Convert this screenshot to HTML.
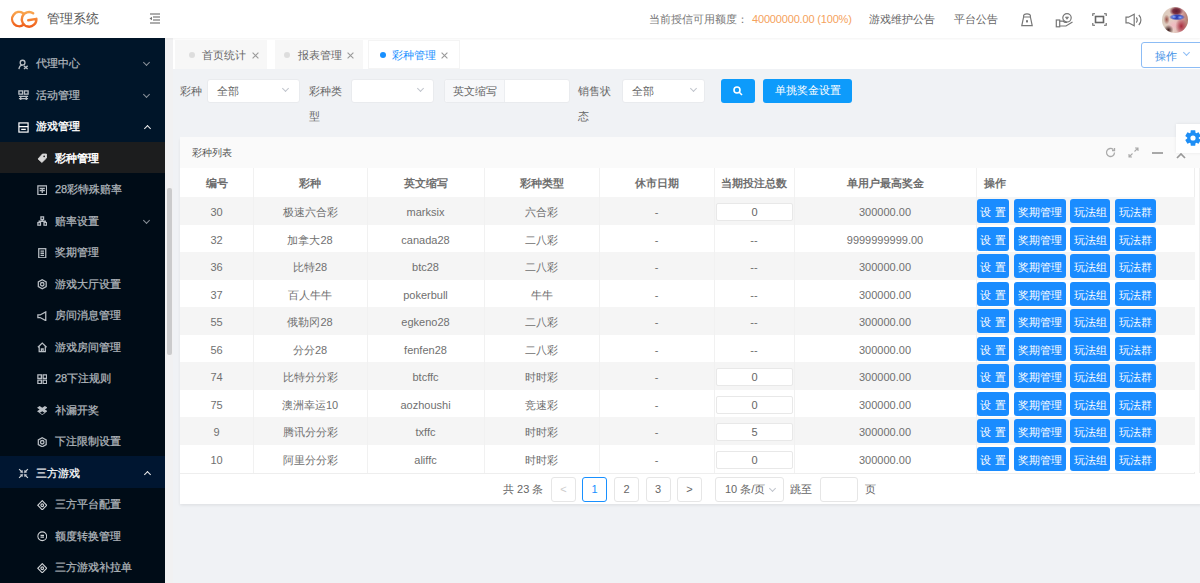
<!DOCTYPE html>
<html><head><meta charset="utf-8">
<style>
*{box-sizing:border-box;margin:0;padding:0}
html,body{width:1200px;height:583px;overflow:hidden;background:#f0f2f5;font-family:"Liberation Sans",sans-serif;font-size:11px;color:#666;position:relative}
.a{position:absolute;white-space:nowrap}
#hdr{position:absolute;left:0;top:0;width:1200px;height:38px;background:#fff;z-index:3;box-shadow:0 1px 2px rgba(0,0,0,.05)}
#side{position:absolute;left:0;top:38px;width:165px;height:545px;background:#000c17;overflow:hidden;z-index:2}
.mi{position:absolute;left:0;width:165px;height:31.5px;line-height:31.5px;color:#b0b6bc;font-size:11px;-webkit-text-stroke:0.25px;white-space:nowrap}
.mi .t{position:absolute;left:36px;top:0}
.mi.sub .t{left:55px}
.mi svg{position:absolute;left:17.5px;top:10.5px;width:11px;height:11px}
.mi.sub svg{left:36.5px;width:10.5px;height:10.5px}
.chev{position:absolute;left:144px;top:12px;width:5px;height:5px;border-right:1.6px solid #8a929a;border-bottom:1.6px solid #8a929a;transform:rotate(45deg)}
.chev.up{transform:rotate(-135deg);top:14.5px;left:144.5px;border-color:#eee;border-width:1.9px;width:5px;height:5px}
#tabs{position:absolute;left:165px;top:38px;width:1035px;height:31px;background:#fff;z-index:1}
.tab{position:absolute;top:2px;height:29px;background:#f7f7f7;font-size:11px;color:#666}
.tab .dot{position:absolute;top:12px;width:6px;height:6px;border-radius:50%;background:#ddd}
.tab .tt{position:absolute;top:7px;line-height:16px}
.tab .x{position:absolute;top:12px}
.lbl{position:absolute;font-size:11px;color:#666;line-height:16px}
.sel{position:absolute;background:#fff;border:1px solid #e9ebee;border-radius:3px;height:24px;top:78.8px}
.sel .v{position:absolute;left:9px;top:3px;line-height:16px;font-size:11px;color:#666}
.sel .cv{position:absolute;top:6px;width:5px;height:5px;border-right:1px solid #c0c4cc;border-bottom:1px solid #c0c4cc;transform:rotate(45deg)}
.card{position:absolute;left:180px;top:137px;width:1022px;height:367px;background:#fff;box-shadow:0 1.5px 3px rgba(0,0,0,.07)}
.cardh{position:absolute;left:180px;top:137px;width:1022px;height:31px;background:#fafafa}
.row{position:absolute;left:180px;width:1015px;height:27.5px}
.cell{position:absolute;height:27.5px;line-height:27.5px;padding-top:2px;text-align:center;font-size:11px;color:#707070;white-space:nowrap}
.hc{position:absolute;top:169px;height:29px;line-height:29px;text-align:center;font-size:11px;color:#6e6e6e;font-weight:bold;white-space:nowrap}
.vl{position:absolute;top:168px;width:1px;height:305px;background:#f1f1f1}
.inp{position:absolute;width:77px;height:18px;line-height:17px;border:1px solid #e8e8e8;background:#fff;text-align:center;font-size:11px;color:#666;border-radius:2px}
.btn{position:absolute;height:24px;line-height:24px;background:#1a8cff;color:#fff;border-radius:3px;text-align:center;font-size:11px;white-space:nowrap}
.pg{position:absolute;top:477px;width:25px;height:25px;border:1px solid #e6e6e6;border-radius:3px;background:#fff;text-align:center;line-height:23px;font-size:11px;color:#666}

</style></head><body>
<div id="hdr">
  <svg class="a" style="left:8.8px;top:9.4px" width="30" height="20.6" viewBox="0 0 32 22">
    <defs><linearGradient id="lg" x1="0" y1="0" x2="0" y2="1"><stop offset="0" stop-color="#f9a54e"/><stop offset="1" stop-color="#f0601c"/></linearGradient></defs>
    <path d="M14.8 4.2 A7.6 7.6 0 1 0 15.5 16.8" fill="none" stroke="url(#lg)" stroke-width="2.6" stroke-linecap="round"/>
    <path d="M25.8 4.6 A7.8 7.8 0 1 0 29.2 10.5 L20.5 12" fill="none" stroke="url(#lg)" stroke-width="2.6" stroke-linecap="round" stroke-linejoin="round"/>
  </svg>
  <div class="a" style="left:46.5px;top:10px;font-size:13px;line-height:17px;color:#555">管理系统</div>
  <svg class="a" style="left:149px;top:13px" width="12" height="11" viewBox="0 0 12 11"><g stroke="#777" stroke-width="1.2"><line x1="1" y1="1" x2="11" y2="1"/><line x1="4" y1="4" x2="11" y2="4"/><line x1="4" y1="7" x2="11" y2="7"/><line x1="1" y1="10" x2="11" y2="10"/></g><path d="M0.5 5.5 L3 3.8 L3 7.2Z" fill="#777"/></svg>
  <div class="a" style="left:649px;top:11px;line-height:16px;font-size:11px;color:#777">当前授信可用额度：</div>
  <div class="a" style="left:752px;top:11px;line-height:16px;font-size:11px;color:#f5a25d;letter-spacing:-0.17px">40000000.00 (100%)</div>
  <div class="a" style="left:869px;top:11px;line-height:16px;font-size:11px;color:#666">游戏维护公告</div>
  <div class="a" style="left:954px;top:11px;line-height:16px;font-size:11px;color:#666">平台公告</div>
  <!-- icons -->
  <svg class="a" style="left:1020px;top:12px" width="14" height="16" viewBox="0 0 14 16" fill="none" stroke="#777" stroke-width="1.2"><path d="M3.6 5 C3.2 2.5 4.8 1.8 7 1.8 S10.8 2.5 10.4 5Z"/><path d="M3.6 5 L1.8 13.6 H12.2 L10.4 5"/><rect x="6" y="8.2" width="2" height="2.2" fill="#777" stroke="none"/></svg>
  <svg class="a" style="left:1055px;top:12px" width="19" height="16" viewBox="0 0 19 16" fill="none" stroke="#777" stroke-width="1.2"><rect x="1.3" y="8" width="3.4" height="6.8"/><path d="M4.7 9.2 H8 l2 1.2 h2.2 M4.7 14 H11 l6.5-4"/><circle cx="12" cy="5.8" r="4.2"/><path d="M10.6 4.8 L12 6.6 13.4 4.8" stroke-width="1.4"/></svg>
  <svg class="a" style="left:1092px;top:13px" width="15" height="13" viewBox="0 0 15 13" fill="none" stroke="#666" stroke-width="1.1"><rect x="3.5" y="3.5" width="8" height="6" stroke-width="1.6"/><path d="M0.8 3V0.8H3M12 0.8h2.2V3M14.2 10v2.2H12M3 12.2H0.8V10"/></svg>
  <svg class="a" style="left:1125px;top:13px" width="18" height="14" viewBox="0 0 18 14" fill="none" stroke="#777" stroke-width="1.2"><path d="M1 4.2h2.5L9.2 1.2v11.6L3.5 9.8H1z"/><path d="M11.2 4.5a3.5 3.5 0 0 1 0 5M13.8 2a7 7 0 0 1 0 10"/></svg>
  <div class="a" style="left:1162px;top:7px;width:26px;height:26px;border-radius:50%;overflow:hidden;background:
    radial-gradient(ellipse 3px 2px at 45% 38%,#8fb0ff 0,rgba(143,176,255,0) 100%),
    radial-gradient(ellipse 3px 2px at 70% 40%,#8fb0ff 0,rgba(143,176,255,0) 100%),
    radial-gradient(ellipse 8px 3.2px at 58% 39%,#2a3bb0 0,#3346b8 60%,rgba(51,70,184,0) 100%),
    radial-gradient(ellipse 7px 5px at 55% 16%,#5e1a32 0,#7a3040 50%,rgba(122,48,64,0) 100%),
    radial-gradient(ellipse 6px 8px at 74% 74%,#a82a3c 0,rgba(168,42,60,0) 100%),
    radial-gradient(ellipse 5px 5px at 25% 88%,#3c1c1c 0,rgba(60,28,28,0) 100%),
    radial-gradient(ellipse 7px 6px at 45% 70%,#f0b8c0 0,rgba(240,184,192,0) 100%),
    radial-gradient(ellipse 3px 5px at 18% 48%,#9a5048 0,rgba(154,80,72,0) 100%),
    linear-gradient(90deg,#d9cbbd,#e6cfc4 45%,#d7a6a6 75%,#b07a6a)"></div>
</div>

<div id="side">
  <div style="position:absolute;left:0;top:0;width:165px;height:104px;background:#001529"></div>
  <div style="position:absolute;left:0;top:104px;width:165px;height:31px;background:#1c1d1e"></div>
  <div style="position:absolute;left:0;top:418px;width:165px;height:32px;background:#001631"></div>
  <!-- items -->
  <div class="mi" style="top:10.25px"><svg width="12" height="12" viewBox="0 0 12 12" fill="none" stroke="#b8bec4" stroke-width="1.45"><circle cx="5" cy="4" r="2.6"/><path d="M1 11c.5-3 2-4.3 4-4.3M6.5 7.5l4 3.5M10.5 7.5l-4 3.5"/></svg><span class="t">代理中心</span><i class="chev"></i></div>
  <div class="mi" style="top:41.75px"><svg width="12" height="12" viewBox="0 0 12 12" fill="none" stroke="#b8bec4" stroke-width="1.45"><rect x="1" y="1" width="4" height="3.5"/><rect x="7" y="1" width="4" height="3.5"/><path d="M1 7h10M1 9.5h10M3 7v4M9 7v4"/></svg><span class="t">活动管理</span><i class="chev"></i></div>
  <div class="mi" style="top:73.25px;color:#fff"><svg width="12" height="12" viewBox="0 0 12 12" fill="none" stroke="#fff" stroke-width="1.3"><rect x="1" y="1" width="10" height="10"/><path d="M1 5h10M3.5 8h5"/></svg><span class="t" style="-webkit-text-stroke:0.35px">游戏管理</span><i class="chev up"></i></div>
  <div class="mi sub" style="top:104.75px;color:#fff"><svg width="12" height="12" viewBox="0 0 12 12"><path d="M1.2 6.8L6.2 1.2h4.6v4.6L5.6 10.8z" fill="#d8d8d8" stroke="#d8d8d8" stroke-width="1" stroke-linejoin="round"/><circle cx="8.2" cy="3.8" r="1" fill="#1c1d1e"/></svg><span class="t" style="-webkit-text-stroke:0.5px">彩种管理</span></div>
  <div class="mi sub" style="top:136.25px"><svg width="12" height="12" viewBox="0 0 12 12" fill="none" stroke="#b8bec4" stroke-width="1.45"><rect x="1" y="1" width="10" height="10"/><path d="M3 4h6M3 6.5h6M6 4v5"/></svg><span class="t">28彩特殊赔率</span></div>
  <div class="mi sub" style="top:167.75px"><svg width="12" height="12" viewBox="0 0 12 12" fill="none" stroke="#b8bec4" stroke-width="1.45"><rect x="4.5" y="1" width="3" height="3"/><rect x="1" y="7.5" width="3" height="3"/><rect x="8" y="7.5" width="3" height="3"/><path d="M6 4v2M2.5 7.5V6h7v1.5"/></svg><span class="t">赔率设置</span><i class="chev"></i></div>
  <div class="mi sub" style="top:199.25px"><svg width="12" height="12" viewBox="0 0 12 12" fill="none" stroke="#b8bec4" stroke-width="1.45"><rect x="2" y="0.8" width="8" height="10.4"/><path d="M4 3.5h4M4 6h4M4 8.5h4"/></svg><span class="t">奖期管理</span></div>
  <div class="mi sub" style="top:230.75px"><svg width="12" height="12" viewBox="0 0 12 12" fill="none" stroke="#b8bec4" stroke-width="1.45"><path d="M6 0.8l4.5 2.6v5.2L6 11.2 1.5 8.6V3.4z"/><circle cx="6" cy="6" r="2"/></svg><span class="t">游戏大厅设置</span></div>
  <div class="mi sub" style="top:262.25px"><svg width="12" height="12" viewBox="0 0 12 12" fill="none" stroke="#b8bec4" stroke-width="1.45"><path d="M1 4.5h2.5L10 1v10L3.5 7.5H1z"/></svg><span class="t">房间消息管理</span></div>
  <div class="mi sub" style="top:293.75px"><svg width="12" height="12" viewBox="0 0 12 12" fill="none" stroke="#b8bec4" stroke-width="1.45"><path d="M1 6L6 1.2 11 6M2.5 4.8V11h7V4.8M5 11V8h2v3"/></svg><span class="t">游戏房间管理</span></div>
  <div class="mi sub" style="top:325.25px"><svg width="12" height="12" viewBox="0 0 12 12" fill="none" stroke="#b8bec4" stroke-width="1.45"><rect x="1" y="1" width="4" height="4"/><rect x="7" y="1" width="4" height="4"/><rect x="1" y="7" width="4" height="4"/><rect x="7" y="7" width="4" height="4"/></svg><span class="t">28下注规则</span></div>
  <div class="mi sub" style="top:356.75px"><svg width="12" height="12" viewBox="0 0 12 12" fill="#b8bec4"><path d="M3 1l3 2 3-2 3 2-3 2 3 2-3 2-3-2-3 2-3-2 3-2-3-2z"/><path d="M3 9.5l3 2 3-2v-.8L6 10.5 3 8.7z"/></svg><span class="t">补漏开奖</span></div>
  <div class="mi sub" style="top:388.25px"><svg width="12" height="12" viewBox="0 0 12 12" fill="none" stroke="#b8bec4" stroke-width="1.45"><path d="M6 0.8l4.5 2.6v5.2L6 11.2 1.5 8.6V3.4z"/><circle cx="6" cy="6" r="2"/></svg><span class="t">下注限制设置</span></div>
  <div class="mi" style="top:419.75px;color:#fff"><svg width="12" height="12" viewBox="0 0 12 12" fill="#d0d4d8" stroke="#d0d4d8" stroke-width="1.3"><path d="M1.2 1.2L4 4M10.8 1.2L8 4M1.2 10.8L4 8M10.8 10.8L8 8" fill="none"/><path d="M5.2 5.2L2.4 4.6 4.6 2.4z M6.8 5.2L9.6 4.6 7.4 2.4z M5.2 6.8L2.4 7.4 4.6 9.6z M6.8 6.8L9.6 7.4 7.4 9.6z" stroke-width="0.5"/></svg><span class="t">三方游戏</span><i class="chev up"></i></div>
  <div class="mi sub" style="top:451.25px"><svg width="12" height="12" viewBox="0 0 12 12" fill="none" stroke="#cfd3d6" stroke-width="1.3"><path d="M6 0.8L11.2 6 6 11.2 0.8 6z"/><circle cx="6" cy="6" r="1.5"/></svg><span class="t">三方平台配置</span></div>
  <div class="mi sub" style="top:482.75px"><svg width="12" height="12" viewBox="0 0 12 12" fill="none" stroke="#cfd3d6" stroke-width="1.2"><circle cx="6" cy="6" r="5"/><path d="M4 5h4M4 7h4"/></svg><span class="t">额度转换管理</span></div>
  <div class="mi sub" style="top:514.25px"><svg width="12" height="12" viewBox="0 0 12 12" fill="none" stroke="#cfd3d6" stroke-width="1.3"><path d="M6 0.8L11.2 6 6 11.2 0.8 6z"/><circle cx="6" cy="6" r="1.5"/></svg><span class="t">三方游戏补拉单</span></div>
</div>
<!-- scrollbar strip -->
<div class="a" style="left:165px;top:38px;width:8px;height:545px;background:#f1f1f2;z-index:2"></div>
<div class="a" style="left:166.5px;top:188px;width:5.5px;height:167px;background:#cbcbcc;border-radius:2px;z-index:2"></div>

<div id="tabs">
  <div class="tab" style="left:10px;width:92px"><i class="dot" style="left:13.5px"></i><span class="tt" style="left:27px">首页统计</span><svg class="x" style="left:76.5px" width="7" height="7" viewBox="0 0 7 7" stroke="#9a9a9a" stroke-width="1.1"><path d="M0.6 0.6L6.4 6.4M6.4 0.6L0.6 6.4"/></svg></div>
  <div class="tab" style="left:110px;width:88px"><i class="dot" style="left:8.5px"></i><span class="tt" style="left:23px">报表管理</span><svg class="x" style="left:71.5px" width="7" height="7" viewBox="0 0 7 7" stroke="#9a9a9a" stroke-width="1.1"><path d="M0.6 0.6L6.4 6.4M6.4 0.6L0.6 6.4"/></svg></div>
  <div class="tab" style="left:203px;width:92px;background:#fff;box-shadow:inset 0 0 0 1px #f4f4f4"><i class="dot" style="left:11.5px;background:#1890ff"></i><span class="tt" style="left:24px;color:#1890ff">彩种管理</span><svg class="x" style="left:72.5px" width="7" height="7" viewBox="0 0 7 7" stroke="#9a9a9a" stroke-width="1.1"><path d="M0.6 0.6L6.4 6.4M6.4 0.6L0.6 6.4"/></svg></div>
  <div class="a" style="left:976px;top:4px;width:70px;height:25.5px;border:1px solid #8cbcf5;border-radius:3px;background:#fff"><span class="a" style="left:12.5px;top:4.5px;line-height:16px;font-size:11px;color:#3a8ee6">操作</span><i class="a" style="left:42px;top:7px;width:5px;height:5px;border-right:1px solid #8cbcf5;border-bottom:1px solid #8cbcf5;transform:rotate(45deg)"></i></div>
</div>

<!-- filters -->
<div class="lbl" style="left:180px;top:83px">彩种</div>
<div class="sel" style="left:207px;width:93px"><span class="v">全部</span><i class="cv" style="left:75px"></i></div>
<div class="lbl" style="left:309px;top:83px">彩种类</div>
<div class="lbl" style="left:309px;top:108px">型</div>
<div class="sel" style="left:351px;width:83px"><i class="cv" style="left:66px"></i></div>
<div class="sel" style="left:444px;width:126px"><span class="a" style="left:0;top:0;width:60px;height:22px;background:#f7f8fa;border-right:1px solid #eceef1;border-radius:3px 0 0 3px;line-height:22px;text-align:center;font-size:11px;color:#666">英文缩写</span></div>
<div class="lbl" style="left:578px;top:83px">销售状</div>
<div class="lbl" style="left:578px;top:108px">态</div>
<div class="sel" style="left:622px;width:83px"><span class="v">全部</span><i class="cv" style="left:68px"></i></div>
<div class="btn" style="left:721px;top:79px;width:34px;height:23.5px;background:#0d9bfb"><svg style="position:absolute;left:12px;top:7px" width="10" height="10" viewBox="0 0 10 10" fill="none" stroke="#fff" stroke-width="1.6"><circle cx="4" cy="4" r="3"/><path d="M6.3 6.3L9 9"/></svg></div>
<div class="btn" style="left:763px;top:79px;width:89px;height:23.5px;line-height:23.5px;font-size:11px;background:#0d9bfb">单挑奖金设置</div>

<!-- card -->
<div class="card"></div>
<div class="cardh"></div>
<div class="a" style="left:192px;top:144.5px;line-height:16px;font-size:10px;color:#555">彩种列表</div>
<!-- card tools -->
<svg class="a" style="left:1105px;top:147px" width="11" height="11" viewBox="0 0 11 11" fill="none" stroke="#aaa" stroke-width="1.3"><path d="M9.5 5.5a4 4 0 1 1-1.2-2.9"/><path d="M9.5 1v2.5H7" /></svg>
<svg class="a" style="left:1128px;top:147px" width="11" height="11" viewBox="0 0 11 11" fill="none" stroke="#aaa" stroke-width="1.1"><path d="M1 10l3.5-3.5M10 1L6.5 4.5M1 7v3h3M10 4V1H7"/></svg>
<div class="a" style="left:1152px;top:152px;width:11px;height:1.5px;background:#a8a8a8"></div>
<svg class="a" style="left:1176px;top:153px" width="10" height="6" viewBox="0 0 10 6" fill="none" stroke="#999" stroke-width="1.7"><path d="M1 5l4-4 4 4"/></svg>
<!-- gear -->
<div class="a" style="left:1176px;top:124px;width:30px;height:28.5px;background:#fff;box-shadow:0 0 3px rgba(0,0,0,.08)"></div>
<svg class="a" style="left:1183px;top:128px" width="20" height="20" viewBox="-10 -10 20 20"><path fill="#1e8ef5" fill-rule="evenodd" d="M2.52 5.22 L2.21 7.69 L-2.21 7.69 L-2.52 5.22 L-3.26 4.80 L-5.55 5.76 L-7.76 1.93 L-5.78 0.43 L-5.78 -0.43 L-7.76 -1.93 L-5.55 -5.76 L-3.26 -4.80 L-2.52 -5.22 L-2.21 -7.69 L2.21 -7.69 L2.52 -5.22 L3.26 -4.80 L5.55 -5.76 L7.76 -1.93 L5.78 -0.43 L5.78 0.43 L7.76 1.93 L5.55 5.76 L3.26 4.80Z M2.6 0 A2.6 2.6 0 1 0 -2.6 0 A2.6 2.6 0 1 0 2.6 0Z"/></svg>

<!-- table header -->
<div class="hc" style="left:180px;width:73px">编号</div>
<div class="hc" style="left:253px;width:114px">彩种</div>
<div class="hc" style="left:367px;width:117px">英文缩写</div>
<div class="hc" style="left:484px;width:115px">彩种类型</div>
<div class="hc" style="left:599px;width:115px">休市日期</div>
<div class="hc" style="left:714px;width:80px">当期投注总数</div>
<div class="hc" style="left:794px;width:182px">单用户最高奖金</div>
<div class="hc" style="left:984px;text-align:left">操作</div>
<div class="a" style="left:180px;top:196.5px;width:1015px;height:1px;background:#f0f0f0"></div>
<div class="a" style="left:1194px;top:168px;width:1px;height:305px;background:#eee"></div>
<div class="a" style="left:1199px;top:168px;width:1px;height:305px;background:#f0f0f0"></div>
<div class="row" style="top:197.0px;background:#f5f5f5"></div>
<div class="cell" style="left:180px;width:73px;top:197.0px">30</div>
<div class="cell" style="left:253px;width:114px;top:197.0px">极速六合彩</div>
<div class="cell" style="left:367px;width:117px;top:197.0px">marksix</div>
<div class="cell" style="left:484px;width:115px;top:197.0px">六合彩</div>
<div class="cell" style="left:599px;width:115px;top:197.0px">-</div>
<div class="inp" style="left:716px;top:203.0px">0</div>
<div class="cell" style="left:794px;width:182px;top:197.0px">300000.00</div>
<div class="btn" style="left:977px;top:199.0px;width:32px;line-height:26px">设 置</div>
<div class="btn" style="left:1014px;top:199.0px;width:52px;line-height:26px">奖期管理</div>
<div class="btn" style="left:1070px;top:199.0px;width:40px;line-height:26px">玩法组</div>
<div class="btn" style="left:1115px;top:199.0px;width:41px;line-height:26px">玩法群</div>
<div class="row" style="top:224.5px;background:#fff"></div>
<div class="cell" style="left:180px;width:73px;top:224.5px">32</div>
<div class="cell" style="left:253px;width:114px;top:224.5px">加拿大28</div>
<div class="cell" style="left:367px;width:117px;top:224.5px">canada28</div>
<div class="cell" style="left:484px;width:115px;top:224.5px">二八彩</div>
<div class="cell" style="left:599px;width:115px;top:224.5px">-</div>
<div class="cell" style="left:714px;width:80px;top:224.5px">--</div>
<div class="cell" style="left:794px;width:182px;top:224.5px">9999999999.00</div>
<div class="btn" style="left:977px;top:226.5px;width:32px;line-height:26px">设 置</div>
<div class="btn" style="left:1014px;top:226.5px;width:52px;line-height:26px">奖期管理</div>
<div class="btn" style="left:1070px;top:226.5px;width:40px;line-height:26px">玩法组</div>
<div class="btn" style="left:1115px;top:226.5px;width:41px;line-height:26px">玩法群</div>
<div class="row" style="top:252.0px;background:#f5f5f5"></div>
<div class="cell" style="left:180px;width:73px;top:252.0px">36</div>
<div class="cell" style="left:253px;width:114px;top:252.0px">比特28</div>
<div class="cell" style="left:367px;width:117px;top:252.0px">btc28</div>
<div class="cell" style="left:484px;width:115px;top:252.0px">二八彩</div>
<div class="cell" style="left:599px;width:115px;top:252.0px">-</div>
<div class="cell" style="left:714px;width:80px;top:252.0px">--</div>
<div class="cell" style="left:794px;width:182px;top:252.0px">300000.00</div>
<div class="btn" style="left:977px;top:254.0px;width:32px;line-height:26px">设 置</div>
<div class="btn" style="left:1014px;top:254.0px;width:52px;line-height:26px">奖期管理</div>
<div class="btn" style="left:1070px;top:254.0px;width:40px;line-height:26px">玩法组</div>
<div class="btn" style="left:1115px;top:254.0px;width:41px;line-height:26px">玩法群</div>
<div class="row" style="top:279.5px;background:#fff"></div>
<div class="cell" style="left:180px;width:73px;top:279.5px">37</div>
<div class="cell" style="left:253px;width:114px;top:279.5px">百人牛牛</div>
<div class="cell" style="left:367px;width:117px;top:279.5px">pokerbull</div>
<div class="cell" style="left:484px;width:115px;top:279.5px">牛牛</div>
<div class="cell" style="left:599px;width:115px;top:279.5px">-</div>
<div class="cell" style="left:714px;width:80px;top:279.5px">--</div>
<div class="cell" style="left:794px;width:182px;top:279.5px">300000.00</div>
<div class="btn" style="left:977px;top:281.5px;width:32px;line-height:26px">设 置</div>
<div class="btn" style="left:1014px;top:281.5px;width:52px;line-height:26px">奖期管理</div>
<div class="btn" style="left:1070px;top:281.5px;width:40px;line-height:26px">玩法组</div>
<div class="btn" style="left:1115px;top:281.5px;width:41px;line-height:26px">玩法群</div>
<div class="row" style="top:307.0px;background:#f5f5f5"></div>
<div class="cell" style="left:180px;width:73px;top:307.0px">55</div>
<div class="cell" style="left:253px;width:114px;top:307.0px">俄勒冈28</div>
<div class="cell" style="left:367px;width:117px;top:307.0px">egkeno28</div>
<div class="cell" style="left:484px;width:115px;top:307.0px">二八彩</div>
<div class="cell" style="left:599px;width:115px;top:307.0px">-</div>
<div class="cell" style="left:714px;width:80px;top:307.0px">--</div>
<div class="cell" style="left:794px;width:182px;top:307.0px">300000.00</div>
<div class="btn" style="left:977px;top:309.0px;width:32px;line-height:26px">设 置</div>
<div class="btn" style="left:1014px;top:309.0px;width:52px;line-height:26px">奖期管理</div>
<div class="btn" style="left:1070px;top:309.0px;width:40px;line-height:26px">玩法组</div>
<div class="btn" style="left:1115px;top:309.0px;width:41px;line-height:26px">玩法群</div>
<div class="row" style="top:334.5px;background:#fff"></div>
<div class="cell" style="left:180px;width:73px;top:334.5px">56</div>
<div class="cell" style="left:253px;width:114px;top:334.5px">分分28</div>
<div class="cell" style="left:367px;width:117px;top:334.5px">fenfen28</div>
<div class="cell" style="left:484px;width:115px;top:334.5px">二八彩</div>
<div class="cell" style="left:599px;width:115px;top:334.5px">-</div>
<div class="cell" style="left:714px;width:80px;top:334.5px">--</div>
<div class="cell" style="left:794px;width:182px;top:334.5px">300000.00</div>
<div class="btn" style="left:977px;top:336.5px;width:32px;line-height:26px">设 置</div>
<div class="btn" style="left:1014px;top:336.5px;width:52px;line-height:26px">奖期管理</div>
<div class="btn" style="left:1070px;top:336.5px;width:40px;line-height:26px">玩法组</div>
<div class="btn" style="left:1115px;top:336.5px;width:41px;line-height:26px">玩法群</div>
<div class="row" style="top:362.0px;background:#f5f5f5"></div>
<div class="cell" style="left:180px;width:73px;top:362.0px">74</div>
<div class="cell" style="left:253px;width:114px;top:362.0px">比特分分彩</div>
<div class="cell" style="left:367px;width:117px;top:362.0px">btcffc</div>
<div class="cell" style="left:484px;width:115px;top:362.0px">时时彩</div>
<div class="cell" style="left:599px;width:115px;top:362.0px">-</div>
<div class="inp" style="left:716px;top:368.0px">0</div>
<div class="cell" style="left:794px;width:182px;top:362.0px">300000.00</div>
<div class="btn" style="left:977px;top:364.0px;width:32px;line-height:26px">设 置</div>
<div class="btn" style="left:1014px;top:364.0px;width:52px;line-height:26px">奖期管理</div>
<div class="btn" style="left:1070px;top:364.0px;width:40px;line-height:26px">玩法组</div>
<div class="btn" style="left:1115px;top:364.0px;width:41px;line-height:26px">玩法群</div>
<div class="row" style="top:389.5px;background:#fff"></div>
<div class="cell" style="left:180px;width:73px;top:389.5px">75</div>
<div class="cell" style="left:253px;width:114px;top:389.5px">澳洲幸运10</div>
<div class="cell" style="left:367px;width:117px;top:389.5px">aozhoushi</div>
<div class="cell" style="left:484px;width:115px;top:389.5px">竞速彩</div>
<div class="cell" style="left:599px;width:115px;top:389.5px">-</div>
<div class="inp" style="left:716px;top:395.5px">0</div>
<div class="cell" style="left:794px;width:182px;top:389.5px">300000.00</div>
<div class="btn" style="left:977px;top:391.5px;width:32px;line-height:26px">设 置</div>
<div class="btn" style="left:1014px;top:391.5px;width:52px;line-height:26px">奖期管理</div>
<div class="btn" style="left:1070px;top:391.5px;width:40px;line-height:26px">玩法组</div>
<div class="btn" style="left:1115px;top:391.5px;width:41px;line-height:26px">玩法群</div>
<div class="row" style="top:417.0px;background:#f5f5f5"></div>
<div class="cell" style="left:180px;width:73px;top:417.0px">9</div>
<div class="cell" style="left:253px;width:114px;top:417.0px">腾讯分分彩</div>
<div class="cell" style="left:367px;width:117px;top:417.0px">txffc</div>
<div class="cell" style="left:484px;width:115px;top:417.0px">时时彩</div>
<div class="cell" style="left:599px;width:115px;top:417.0px">-</div>
<div class="inp" style="left:716px;top:423.0px">5</div>
<div class="cell" style="left:794px;width:182px;top:417.0px">300000.00</div>
<div class="btn" style="left:977px;top:419.0px;width:32px;line-height:26px">设 置</div>
<div class="btn" style="left:1014px;top:419.0px;width:52px;line-height:26px">奖期管理</div>
<div class="btn" style="left:1070px;top:419.0px;width:40px;line-height:26px">玩法组</div>
<div class="btn" style="left:1115px;top:419.0px;width:41px;line-height:26px">玩法群</div>
<div class="row" style="top:444.5px;background:#fff"></div>
<div class="cell" style="left:180px;width:73px;top:444.5px">10</div>
<div class="cell" style="left:253px;width:114px;top:444.5px">阿里分分彩</div>
<div class="cell" style="left:367px;width:117px;top:444.5px">aliffc</div>
<div class="cell" style="left:484px;width:115px;top:444.5px">时时彩</div>
<div class="cell" style="left:599px;width:115px;top:444.5px">-</div>
<div class="inp" style="left:716px;top:450.5px">0</div>
<div class="cell" style="left:794px;width:182px;top:444.5px">300000.00</div>
<div class="btn" style="left:977px;top:446.5px;width:32px;line-height:26px">设 置</div>
<div class="btn" style="left:1014px;top:446.5px;width:52px;line-height:26px">奖期管理</div>
<div class="btn" style="left:1070px;top:446.5px;width:40px;line-height:26px">玩法组</div>
<div class="btn" style="left:1115px;top:446.5px;width:41px;line-height:26px">玩法群</div>
<div class="vl" style="left:253px"></div>
<div class="vl" style="left:367px"></div>
<div class="vl" style="left:484px"></div>
<div class="vl" style="left:599px"></div>
<div class="vl" style="left:714px"></div>
<div class="vl" style="left:794px"></div>
<div class="vl" style="left:976px"></div>
<div class="a" style="left:180px;top:472.5px;width:1015px;height:1px;background:#eeeeee"></div>

<!-- pagination -->
<div class="a" style="left:503px;top:481px;line-height:16px;font-size:11px;color:#666">共 23 条</div>
<div class="pg" style="left:551px;color:#ccc">&lt;</div>
<div class="pg" style="left:582px;border-color:#1890ff;color:#1890ff">1</div>
<div class="pg" style="left:614px">2</div>
<div class="pg" style="left:645.5px">3</div>
<div class="pg" style="left:677px">&gt;</div>
<div class="pg" style="left:715px;width:69px;text-align:left;padding-left:9px">10 条/页<i class="a" style="left:54px;top:8px;width:5px;height:5px;border-right:1px solid #c0c4cc;border-bottom:1px solid #c0c4cc;transform:rotate(45deg)"></i></div>
<div class="a" style="left:790px;top:481px;line-height:16px;font-size:11px;color:#666">跳至</div>
<div class="pg" style="left:820px;width:38px"></div>
<div class="a" style="left:865px;top:481px;line-height:16px;font-size:11px;color:#666">页</div>

</body></html>
